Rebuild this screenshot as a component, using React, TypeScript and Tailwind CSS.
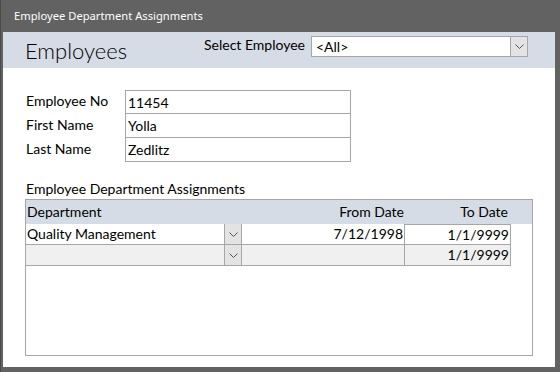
import React from "react";

const Chevron = () => (
  <svg width="9" height="5" viewBox="0 0 9 5" className="block">
    <path d="M0.5 0.5 L4.5 4.5 L8.5 0.5" fill="none" stroke="#555" strokeWidth="1" />
  </svg>
);

const fields = [
  { label: "Employee No", value: "11454" },
  { label: "First Name", value: "Yolla" },
  { label: "Last Name", value: "Zedlitz" },
];

const App = () => {
  return (
    <div className="w-[560px] h-[372px] bg-[#626262] flex flex-col border-l border-[#4a4a4a] font-['Lato',sans-serif] text-black">
      <div className="h-[32px] flex items-center pl-[13px] text-white text-[11.2px] font-['Noto_Sans',sans-serif]">
        Employee Department Assignments
      </div>
      <div className="flex-1 ml-[2px] mr-[5px] mb-[5px] bg-white flex flex-col">
        {/* header band */}
        <div className="h-[36px] bg-[#d6dce5] flex items-start">
          <div className="ml-[22px] w-[179px] mt-[6px] text-[22px] leading-[26px] font-light">Employees</div>
          <div className="w-[107px] mt-[4px] text-[14px] leading-[18px]">Select Employee</div>
          <div className="mt-[4px] w-[217px] h-[21px] border border-[#a6a6a6] bg-white flex">
            <div className="flex-1 pl-[4px] text-[14px] leading-[19px]">&lt;All&gt;</div>
            <div className="w-[17px] h-full border-l border-[#a6a6a6] bg-[#e3e3e3] flex items-center justify-center">
              <Chevron />
            </div>
          </div>
        </div>

        {/* employee fields */}
        <div className="mt-[22px] ml-[23px] flex flex-col">
          {fields.map((f, i) => (
            <div key={f.label} className="flex h-[24px]">
              <div className="w-[99px] pt-[2px] text-[14px] leading-[18px]">{f.label}</div>
              <div
                className={`w-[226px] border-x border-b border-[#a6a6a6] pl-[2px] pt-[3px] text-[14px] leading-[18px] ${
                  i === 0 ? "border-t" : ""
                }`}
              >
                {f.value}
              </div>
            </div>
          ))}
        </div>

        {/* subform */}
        <div className="mt-[18px] ml-[23px] text-[14px] leading-[18px]">Employee Department Assignments</div>
        <div className="mt-[1px] ml-[22px] w-[508px] h-[157px] border border-[#a6a6a6] flex flex-col text-[14px] leading-[18px]">
          <div className="h-[24px] bg-[#d6dce5] flex items-center">
            <div className="w-[218px] pl-[1px]">Department</div>
            <div className="w-[162px] text-right pr-[2px]">From Date</div>
            <div className="w-[104px] text-right pr-[2px]">To Date</div>
          </div>
          {[
            { dept: "Quality Management", from: "7/12/1998", to: "1/1/9999", bg: "bg-white", first: true },
            { dept: "", from: "", to: "1/1/9999", bg: "bg-[#f0f0f0]", first: false },
          ].map((r, i) => (
            <div key={i} className={`w-[485px] h-[21px] flex border-b border-[#a6a6a6] ${r.bg}`}>
              <div className="w-[198px] pl-[1px] pt-[1px]">{r.dept}</div>
              <div className="w-[18px] h-full border-x border-[#a6a6a6] bg-[#e3e3e3] flex items-center justify-center">
                <Chevron />
              </div>
              <div className="w-[163px] border-r border-[#a6a6a6] text-right pr-[1px] pt-[1px]">{r.from}</div>
              <div
                className={`flex-1 border-r border-[#a6a6a6] text-right pr-[1px] pt-[1px] ${
                  r.first ? "border-t" : ""
                }`}
              >
                {r.to}
              </div>
            </div>
          ))}
        </div>
      </div>
    </div>
  );
};

export default App;
